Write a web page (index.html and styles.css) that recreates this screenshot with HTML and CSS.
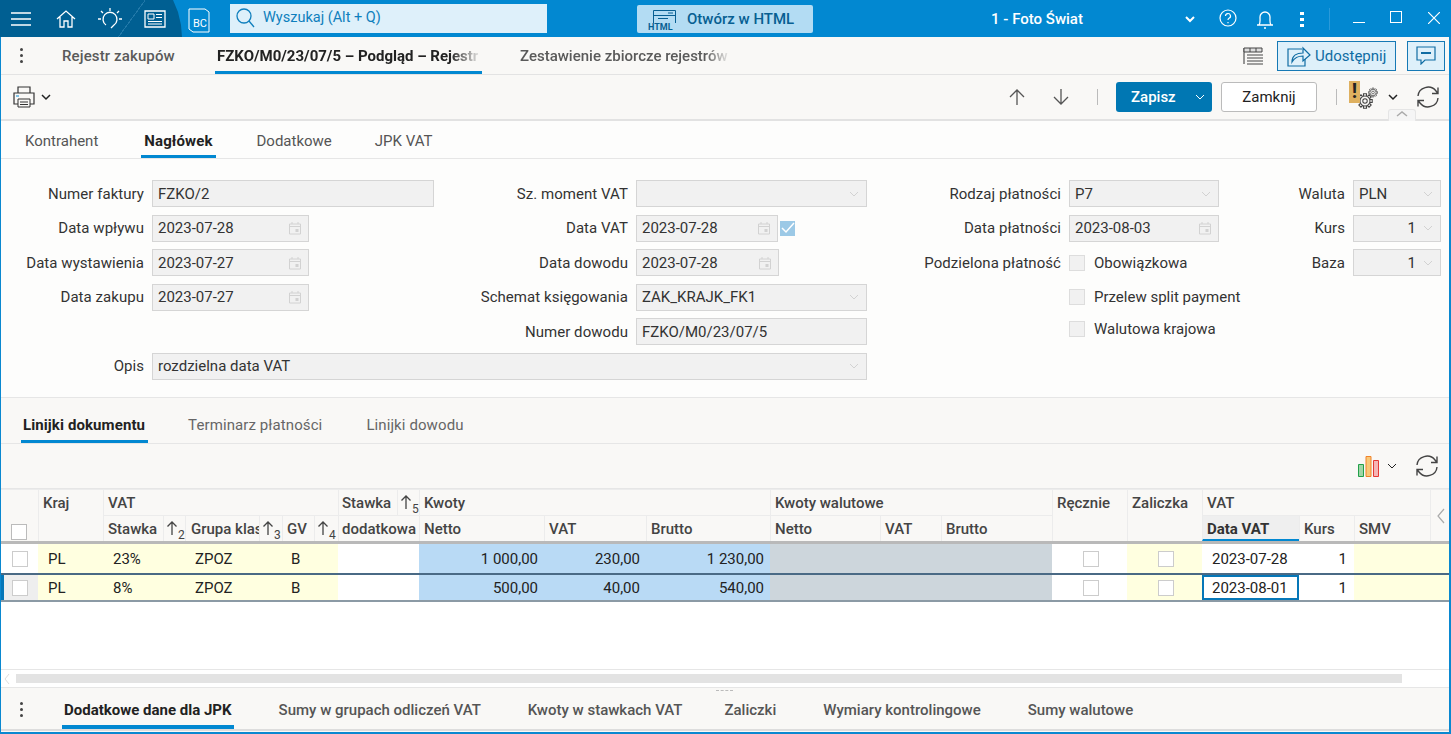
FILE: index.html
```html
<!DOCTYPE html>
<html lang="pl">
<head>
<meta charset="utf-8">
<title>FZKO/M0/23/07/5</title>
<link rel="stylesheet" href="styles.css">
</head>
<body>
<svg class="defs" width="0" height="0">
  <symbol id="cal" viewBox="0 0 14 14"><path d="M1.500 3h11v10h-11zM1.500 5.500h11M4 1v2M10 1v2" fill="none" stroke="currentColor"/><rect x="7.500" y="8" width="3" height="3" fill="currentColor"/></symbol>
  <symbol id="chev" viewBox="0 0 12 12"><path d="M2 4l4 4 4-4" fill="none" stroke="currentColor"/></symbol>
  <symbol id="refresh" viewBox="0 0 26 24"><path d="M3 11a10 9.500 0 0 1 18-5l2 2.500M23 2.500v6h-6M23 13a10 9.500 0 0 1-18 5l-2-2.500M3 21.500v-6h6" fill="none" stroke="currentColor" stroke-width="1.400"/></symbol>
  <symbol id="sort" viewBox="0 0 12 16"><path d="M6 15V2M1.500 6.500L6 2l4.500 4.500" fill="none" stroke="currentColor" stroke-width="1.300"/></symbol>
  <path id="tooth" d="M-1.500-5V-7.200H1.500V-5" fill="none" stroke="#444" stroke-width="1.100"/>
  <g id="gear">
    <circle r="5" fill="#f9f8f6" stroke="#444" stroke-width="1.100"/>
    <circle r="2.200" fill="none" stroke="#444" stroke-width="1.100"/>
    <use href="#tooth"/><use href="#tooth" transform="rotate(45)"/><use href="#tooth" transform="rotate(90)"/><use href="#tooth" transform="rotate(135)"/><use href="#tooth" transform="rotate(180)"/><use href="#tooth" transform="rotate(225)"/><use href="#tooth" transform="rotate(270)"/><use href="#tooth" transform="rotate(315)"/>
  </g>
</svg>
<div class="app">
  <header class="topbar">
    <div class="nav-dark">
      <svg class="ti" width="20" height="14" viewBox="0 0 20 14"><path d="M0 1h20M0 7h20M0 13h20" stroke="#fff" stroke-width="1.500"/></svg>
      <svg class="ti home" width="20" height="20" viewBox="0 0 20 20"><path d="M1 10L10 2l9 8M4 8v10h4v-6h4v6h4V8" fill="none" stroke="#fff" stroke-width="1.300"/></svg>
      <svg class="ti bulb" width="24" height="24" viewBox="0 0 24 24"><path d="M8 18a7 7 0 1 1 8 0l-3 3M12 1v3M3 4l2 2M21 4l-2 2M0 12h3M21 12h3" fill="none" stroke="#fff" stroke-width="1.300"/></svg>
      <svg class="ti news" width="22" height="18" viewBox="0 0 22 18"><path d="M1 1h20v16H1z" fill="none" stroke="#fff" stroke-width="1.300"/><path d="M4 4h6v5H4zM12 4.500h6M12 7.500h6M4 11.500h14M4 14h14" fill="none" stroke="#fff"/></svg>
    </div>
    <svg class="bc" width="22" height="25" viewBox="0 0 22 25"><path d="M1 1h16l4 3v20H5l-4-3z" fill="none" stroke="#fff"/><text x="5" y="19" class="bc-text">BC</text></svg>
    <div class="search">
      <svg width="19" height="20" viewBox="0 0 19 20"><circle cx="8" cy="8" r="7" fill="none" stroke="#0f7fbd" stroke-width="1.300"/><path d="M13 13l5 6" stroke="#0f7fbd" stroke-width="1.300"/></svg>
      <span>Wyszukaj (Alt + Q)</span>
    </div>
    <div class="html-btn">
      <svg width="28" height="22" viewBox="0 0 28 22"><path d="M5.500 14V1.500h22V14M5.500 6.500h22M10 9.500h10M20 4h5" fill="none" stroke="#075f92"/><text x="0" y="21" class="html-text">HTML</text></svg>
      <span>Otwórz w HTML</span>
    </div>
    <div class="company">1 - Foto Świat</div>
    <svg class="t-chev" width="12" height="12" viewBox="0 0 12 12"><path d="M2 4l4 4 4-4" fill="none" stroke="#fff" stroke-width="2"/></svg>
    <svg class="t-help" width="18" height="18" viewBox="0 0 18 18"><circle cx="9" cy="9" r="8" fill="none" stroke="#fff" stroke-width="1.200"/><path d="M6.500 7a2.500 2.500 0 1 1 3.500 2.300c-.7.400-1 .9-1 1.700M9 13v1.200" fill="none" stroke="#fff" stroke-width="1.200"/></svg>
    <svg class="t-bell" width="18" height="20" viewBox="0 0 18 20"><path d="M1 16h16M3 16c1.500-2 1-4 1-8a5 5 0 0 1 10 0c0 4-.5 6 1 8M8 19h2" fill="none" stroke="#fff" stroke-width="1.300"/></svg>
    <svg class="t-kebab" width="4" height="16" viewBox="0 0 4 16"><path d="M0 1h4v3H0zM0 7h4v3H0zM0 13h4v3H0z" fill="#fff"/></svg>
    <div class="t-sep"></div>
    <div class="t-min"></div>
    <div class="t-max"></div>
    <svg class="t-close" width="12" height="12" viewBox="0 0 12 12"><path d="M0 0l12 12M12 0L0 12" stroke="#fff" stroke-width="1.200"/></svg>
  </header>

  <div class="tabsbar">
    <div class="kebab"><i></i><i></i><i></i></div>
    <div class="ptab t1">Rejestr zakupów</div>
    <div class="ptab t2 on"><span class="fade">FZKO/M0/23/07/5 – Podgląd – Rejestr zakupów</span></div>
    <div class="ptab t3"><span class="fade">Zestawienie zbiorcze rejestrów VAT</span></div>
    <svg class="listicon" width="20" height="18" viewBox="0 0 20 18"><path d="M1 1v16" stroke="#333"/><path d="M1 1h18v4H1z" fill="#ddd" stroke="#444"/><path d="M7 1v4M13 1v4M4 8h16M4 11h16M4 14h16M4 17h16" stroke="#444"/></svg>
    <div class="share">
      <svg width="24" height="22" viewBox="0 0 24 22"><path d="M15 4H1v17h17v-7" fill="none" stroke="#0f6ca3" stroke-width="1.200"/><path d="M5 17c0-7 5-9 11-9V3l7 7-7 6v-5c-5 0-8 1-11 6z" fill="none" stroke="#0f6ca3" stroke-width="1.200"/></svg>
      <span>Udostępnij</span>
    </div>
    <div class="comment">
      <svg width="20" height="19" viewBox="0 0 20 19"><path d="M1 1h18v13H9l-4 4v-4H1z" fill="none" stroke="#0f6ca3" stroke-width="1.200"/><path d="M5 6h10v2H5z" fill="#0f6ca3"/></svg>
    </div>
  </div>

  <div class="toolbar">
    <svg class="print" width="22" height="22" viewBox="0 0 22 22"><path d="M5 7V1h12v6M5 18H1V7h20v11h-4" fill="none" stroke="#333" stroke-width="1.200"/><path d="M5 13h12v8H5zM7 16h8M7 18.500h8" fill="none" stroke="#333"/><path d="M3 10h3" stroke="#0a8ad0"/></svg>
    <svg class="ch" width="12" height="12" viewBox="0 0 12 12"><path d="M2 4l4 4 4-4" fill="none" stroke="#222" stroke-width="1.500"/></svg>
    <div class="grow"></div>
    <svg class="arrow" width="16" height="18" viewBox="0 0 16 18"><path d="M8 17V2M1 9l7-7 7 7" fill="none" stroke="#555" stroke-width="1.300"/></svg>
    <svg class="arrow a2" width="16" height="18" viewBox="0 0 16 18"><path d="M8 1v15M1 9l7 7 7-7" fill="none" stroke="#555" stroke-width="1.300"/></svg>
    <div class="vsep vs1"></div>
    <div class="save"><span>Zapisz</span><svg width="12" height="12"><use href="#chev"/></svg></div>
    <div class="close">Zamknij</div>
    <div class="vsep vs2"></div>
    <div class="gears">
      <svg width="21" height="22" viewBox="0 0 21 22"><g transform="translate(16 5.500) scale(.62)"><use href="#gear"/></g><g transform="translate(8 14)"><use href="#gear"/></g></svg>
      <b class="warn">!</b>
    </div>
    <svg class="ch c2" width="12" height="12" viewBox="0 0 12 12"><path d="M2 4l4 4 4-4" fill="none" stroke="#222" stroke-width="1.500"/></svg>
    <svg class="refresh" width="26" height="24"><use href="#refresh"/></svg>
    <div class="collapse"><svg width="14" height="8" viewBox="0 0 14 8"><path d="M2 6l5-4 5 4" fill="none" stroke="#aaa" stroke-width="1.500"/></svg></div>
  </div>

  <nav class="ftabs">
    <div class="ftab">Kontrahent</div>
    <div class="ftab on">Nagłówek</div>
    <div class="ftab">Dodatkowe</div>
    <div class="ftab">JPK VAT</div>
  </nav>

  <section class="form">
    <label>Numer faktury</label><div class="f"><span>FZKO/2</span></div>
    <label>Sz. moment VAT</label><div class="f"><span></span><svg class="fi" width="12" height="12"><use href="#chev"/></svg></div>
    <label>Rodzaj płatności</label><div class="f"><span>P7</span><svg class="fi" width="12" height="12"><use href="#chev"/></svg></div>
    <label>Waluta</label><div class="f"><span>PLN</span><svg class="fi" width="12" height="12"><use href="#chev"/></svg></div>

    <label>Data wpływu</label><div class="f d"><span>2023-07-28</span><svg class="fi" width="14" height="14"><use href="#cal"/></svg></div>
    <label>Data VAT</label><div class="wrap"><div class="f dv"><span>2023-07-28</span><svg class="fi" width="14" height="14"><use href="#cal"/></svg></div><div class="checked"><svg width="14" height="12" viewBox="0 0 14 12"><path d="M1 6l4 4 8-9" fill="none" stroke="#fff" stroke-width="1.500"/></svg></div></div>
    <label>Data płatności</label><div class="f"><span>2023-08-03</span><svg class="fi" width="14" height="14"><use href="#cal"/></svg></div>
    <label>Kurs</label><div class="f n"><span>1</span><svg class="fi" width="12" height="12"><use href="#chev"/></svg></div>

    <label>Data wystawienia</label><div class="f d"><span>2023-07-27</span><svg class="fi" width="14" height="14"><use href="#cal"/></svg></div>
    <label>Data dowodu</label><div class="f dd"><span>2023-07-28</span><svg class="fi" width="14" height="14"><use href="#cal"/></svg></div>
    <label>Podzielona płatność</label><div class="cb"><i></i><span>Obowiązkowa</span></div>
    <label>Baza</label><div class="f n"><span>1</span><svg class="fi" width="12" height="12"><use href="#chev"/></svg></div>

    <label>Data zakupu</label><div class="f d"><span>2023-07-27</span><svg class="fi" width="14" height="14"><use href="#cal"/></svg></div>
    <label>Schemat księgowania</label><div class="f"><span>ZAK_KRAJK_FK1</span><svg class="fi" width="12" height="12"><use href="#chev"/></svg></div>
    <label></label><div class="cb"><i></i><span>Przelew split payment</span></div>
    <label></label><div></div>

    <label></label><div></div>
    <label>Numer dowodu</label><div class="f"><span>FZKO/M0/23/07/5</span></div>
    <label></label><div class="cb up"><i></i><span>Walutowa krajowa</span></div>
    <label></label><div></div>

    <label>Opis</label><div class="f wide"><span>rozdzielna data VAT</span><svg class="fi" width="12" height="12"><use href="#chev"/></svg></div>
  </section>

  <nav class="dtabs">
    <div class="dtab on">Linijki dokumentu</div>
    <div class="dtab">Terminarz płatności</div>
    <div class="dtab">Linijki dowodu</div>
  </nav>

  <div class="charts">
    <svg width="24" height="23" viewBox="0 0 24 23"><path d="M1.500 9.500h5v12h-5z" fill="#9fd6a6" stroke="#22a04a"/><path d="M9 1.500h5v20H9z" fill="#f9c878" stroke="#f0822a"/><path d="M16.500 5.500h5v16h-5z" fill="#f5b5b5" stroke="#e53935"/></svg>
    <svg class="ch c3" width="12" height="12"><use href="#chev"/></svg>
    <svg class="refresh r2" width="26" height="24"><use href="#refresh"/></svg>
  </div>

  <section class="grid">
    <div class="head">
      <div class="h sel"><i></i></div>
      <div class="h kraj">Kraj</div>
      <div class="h g vat">VAT</div>
      <div class="h dod1">Stawka</div>
      <div class="h dods"><svg width="12" height="16"><use href="#sort"/></svg><sub>5</sub></div>
      <div class="h g kw">Kwoty</div>
      <div class="h g kwa">Kwoty walutowe</div>
      <div class="h tall rec">Ręcznie</div>
      <div class="h tall zal">Zaliczka</div>
      <div class="h g vat2">VAT</div>
      <div class="h tail"><svg width="10" height="18" viewBox="0 0 10 18"><path d="M8 2L2 9l6 7" fill="none" stroke="#aaa" stroke-width="1.200"/></svg></div>

      <div class="h">Stawka</div>
      <div class="h s"><svg width="12" height="16"><use href="#sort"/></svg><sub>2</sub></div>
      <div class="h clip">Grupa klasyfikacji</div>
      <div class="h s"><svg width="12" height="16"><use href="#sort"/></svg><sub>3</sub></div>
      <div class="h">GV</div>
      <div class="h s"><svg width="12" height="16"><use href="#sort"/></svg><sub>4</sub></div>
      <div class="h dod2">dodatkowa</div>
      <div class="h">Netto</div>
      <div class="h">VAT</div>
      <div class="h">Brutto</div>
      <div class="h">Netto</div>
      <div class="h">VAT</div>
      <div class="h">Brutto</div>
      <div class="h act">Data VAT</div>
      <div class="h">Kurs</div>
      <div class="h">SMV</div>
    </div>

    <div class="row">
      <div class="c sel"><i></i></div>
      <div class="c y pl">PL</div>
      <div class="c y rate">23%</div>
      <div class="c y gr">ZPOZ</div>
      <div class="c y gv">B</div>
      <div class="c sp2"></div>
      <div class="c bl">1 000,00</div>
      <div class="c bl">230,00</div>
      <div class="c bl">1 230,00</div>
      <div class="c gy sp3"></div>
      <div class="c box"><i></i></div>
      <div class="c box y"><i></i></div>
      <div class="c date">2023-07-28</div>
      <div class="c num">1</div>
      <div class="c y end"></div>
    </div>

    <div class="row cur">
      <div class="c sel"><i></i></div>
      <div class="c y pl">PL</div>
      <div class="c y rate">8%</div>
      <div class="c y gr">ZPOZ</div>
      <div class="c y gv">B</div>
      <div class="c sp2"></div>
      <div class="c bl">500,00</div>
      <div class="c bl">40,00</div>
      <div class="c bl">540,00</div>
      <div class="c gy sp3"></div>
      <div class="c box"><i></i></div>
      <div class="c box y"><i></i></div>
      <div class="c date focus">2023-08-01</div>
      <div class="c num">1</div>
      <div class="c y end"></div>
    </div>
    <div class="blank"></div>
    <div class="hscroll"><svg width="8" height="14" viewBox="0 0 8 14"><path d="M6 2L2 7l4 5" fill="none" stroke="#ddd"/></svg><div class="thumb"></div></div>
  </section>

  <footer class="btabs">
    <div class="grip"></div>
    <div class="kebab"><i></i><i></i><i></i></div>
    <div class="btab on">Dodatkowe dane dla JPK</div>
    <div class="btab">Sumy w grupach odliczeń VAT</div>
    <div class="btab kw3">Kwoty w stawkach VAT</div>
    <div class="btab">Zaliczki</div>
    <div class="btab">Wymiary kontrolingowe</div>
    <div class="btab">Sumy walutowe</div>
  </footer>
</div>
</body>
</html>
```

FILE: styles.css
```css
* { box-sizing: border-box; }
html, body { margin: 0; height: 100%; overflow: hidden; }
body { font: 15px/1.2 Roboto, "Liberation Sans", sans-serif; color: #222; background: #fff; }
.defs { position: absolute; }
svg { display: block; flex: none; }
.app { width: 1451px; height: 734px; display: flex; flex-direction: column; border: solid #0a88d0; border-width: 0 2px 2px 1px; background: #f9f8f6; }

.topbar { margin: 0 -2px 0 -1px; height: 37px; flex: none; background: #0288d1; display: flex; align-items: center; color: #fff; }
.topbar > * { flex: none; }
.nav-dark { width: 182px; height: 37px; background: linear-gradient(126deg, #005f92 117px, #2178a8 117px, #2178a8 118px, #005f92 118px); clip-path: polygon(0 0, 173px 0, 178px 12px, 181px 25px, 182px 37px, 0 37px); display: flex; align-items: center; padding-left: 11px; }
.home { margin-left: 25px; }
.bulb { margin-left: 22px; }
.news { margin-left: 22px; }
.bc { margin-left: 6px; margin-top: 3px; }
.bc-text { font: 11px Roboto, sans-serif; fill: #fff; }
.search { width: 317px; height: 29px; margin-left: 20px; background: #def0fa; display: flex; align-items: center; gap: 8px; padding-left: 6px; color: #0f7fbd; margin-top: -1px; font-size: 14.500px; }
.html-btn { width: 176px; height: 28px; margin-left: 90px; background: #b3dcf3; border-radius: 2px; display: flex; align-items: center; gap: 11px; padding-left: 11px; color: #075f92; font-weight: 500; }
.html-btn svg { margin-top: 3px; }
.html-text { font: 700 9px Roboto, sans-serif; fill: #075f92; }
.company { width: 290px; text-align: center; margin-left: 79px; font-weight: 500; }
.t-chev { margin-left: 2px; }
.t-help { margin-left: 23px; margin-top: -1px; }
.t-bell { margin-left: 19px; }
.t-kebab { margin-left: 26px; }
.t-sep { width: 1px; height: 22px; background: #2a9ada; margin-left: 25px; }
.t-min { width: 12px; height: 1px; background: #fff; margin: 8px 0 0 23px; }
.t-max { width: 12px; height: 12px; border: 1px solid #fff; margin: -3px 0 0 25px; }
.t-close { margin: -2px 0 0 26px; }

.tabsbar { height: 38px; flex: none; display: flex; align-items: center; border-bottom: 1px solid #e3e3e3; position: relative; }
.tabsbar > * { flex: none; }
.kebab { width: 4px; margin-left: 19px; display: flex; flex-direction: column; gap: 3px; }
.kebab i { width: 3px; height: 3px; background: #444; border-radius: 50%; }
.ptab { font-weight: 500; color: #5a5a5a; height: 37px; padding-top: 10px; overflow: hidden; white-space: nowrap; }
.t1 { margin-left: 38px; width: 153px; letter-spacing: .13px; }
.t2 { width: 267px; color: #222; font-weight: 700; padding-left: 2px; border-bottom: 3px solid #0288d1; }
.t3 { width: 211px; margin-left: 38px; }
.fade { display: block; -webkit-mask-image: linear-gradient(90deg, #000 88%, transparent 100%); mask-image: linear-gradient(90deg, #000 88%, transparent 100%); }
.listicon { margin-left: 512px; }
.share { width: 119px; height: 30px; margin-left: 14px; background: #def0fa; border: 1px solid #1679b5; display: flex; align-items: center; gap: 4px; padding-left: 9px; color: #0f6ca3; }
.comment { width: 38px; height: 30px; margin-left: 11px; background: #def0fa; border: 1px solid #1679b5; display: flex; align-items: center; justify-content: center; }

.toolbar { height: 46px; flex: none; display: flex; align-items: center; border-bottom: 2px solid #e2e2e2; position: relative; }
.toolbar > svg, .toolbar > div { flex: none; }
.toolbar > .grow { flex: 1; }
.print { margin-left: 12px; }
.ch { margin-left: 5px; color: #222; }
.a2 { margin-left: 28px; }
.vsep { width: 1px; height: 16px; background: #bbb; }
.vs1 { margin-left: 28px; }
.save { width: 96px; height: 30px; margin-left: 18px; background: #0077b3; color: #fff; border-radius: 3px; font-weight: 500; display: flex; align-items: center; padding-left: 15px; }
.save span { flex: 1; }
.save svg { margin-right: 6px; }
.close { width: 96px; height: 30px; margin-left: 9px; background: #fff; border: 1px solid #bbb; border-radius: 3px; display: flex; align-items: center; justify-content: center; }
.vs2 { margin-left: 19px; }
.gears { width: 28px; height: 28px; margin-left: 12px; position: relative; padding: 4px 0 0 8px; }
.warn { position: absolute; left: 0; top: -2px; width: 11px; height: 22px; background: #deb05f; color: #222; font: 700 20px/21px Roboto, sans-serif; text-align: center; }
.c2 { margin-left: 10px; }
.refresh { margin-left: 16px; margin-right: 8px; color: #444; }
.collapse { position: absolute; right: 33px; bottom: -2px; width: 28px; height: 12px; background: #f5f5f5; border: 1px solid #e5e5e5; border-bottom: 0; display: flex; justify-content: center; border-radius: 3px 3px 0 0; }

.ftabs { height: 38px; flex: none; display: flex; border-bottom: 1px solid #e6e6e6; padding-left: 24px; background: #fdfdfc; }
.ftab { padding: 11px 0 0; color: #555; margin-right: 43px; }
.ftab.on { color: #222; font-weight: 700; letter-spacing: .1px; border-bottom: 3px solid #0288d1; padding: 11px 3px 0; margin: 0 41px 0 0; height: 37px; }

.form { height: 239px; flex: none; display: grid; grid-template-columns: 151px 282px 202px 231px 202px 150px 134px 88px; grid-auto-rows: 34.500px; padding-top: 17.600px; align-items: center; border-bottom: 1px solid #e6e6e6; background: #fdfdfc; }
.form label { text-align: right; padding-right: 8px; color: #333; white-space: nowrap; letter-spacing: .05px; }
.f { height: 27px; background: #f1f1f1; border: 1px solid #d5d5d5; display: flex; align-items: center; justify-content: space-between; padding: 0 5px; color: #333; }
.f.d { width: 157px; }
.f.dv { width: 142px; }
.f.dd { width: 143px; }
.f.n { justify-content: flex-end; gap: 6px; }
.f.wide { grid-column: span 3; }
.fi { color: #d2d2d2; margin-right: 1px; }
.wrap { display: flex; align-items: center; gap: 2px; }
.checked { width: 15px; height: 15px; background: #9cc9e6; display: flex; align-items: center; justify-content: center; flex: none; }
.cb { display: flex; align-items: center; gap: 9px; white-space: nowrap; color: #333; }
.cb i { width: 16px; height: 16px; background: #f1f1f1; border: 1px solid #ddd; flex: none; }
.cb.up { margin-top: -6px; }

.dtabs { height: 46px; flex: none; display: flex; padding-left: 20px; border-bottom: 1px solid #e6e6e6; letter-spacing: .1px; }
.dtab { padding: 18px 0 0; color: #666; margin-right: 44px; }
.dtab.on { color: #222; font-weight: 700; border-bottom: 3px solid #0288d1; padding: 18px 3px 0 2px; margin-right: 40px; }

.charts { height: 45px; flex: none; display: flex; align-items: center; justify-content: flex-end; border-bottom: 1px solid #e6e6e6; padding-right: 9px; }
.c3 { margin-left: 5px; }
.r2 { margin-left: 16px; margin-right: 0; }

.grid { --cols: 37px 65px 60px 22px 74px 23px 32px 24px 59px 22px 125px 102px 124px 110px 61px 111px 75px 75px 97px 55px 76px 19px; flex: 1; display: flex; flex-direction: column; background: #fff; min-height: 0; }
.head { display: grid; grid-template-columns: var(--cols); grid-template-rows: 26px 26px; background: #f9f8f6; border-bottom: 3px solid #b9b9b9; flex: none; }
.h { padding: 4px 4px 0; font-weight: 500; color: #444; border-left: 1px solid #ececec; border-top: 1px solid #ececec; white-space: nowrap; overflow: hidden; }
.h.sel { grid-row: span 2; border-left: 0; display: flex; align-items: flex-end; padding: 0 0 1px 10px; }
.h.sel i { width: 16px; height: 16px; background: #fff; border: 1px solid #bbb; }
.kraj { grid-row: span 2; }
.vat { grid-column: span 6; }
.kw { grid-column: span 3; }
.kwa { grid-column: span 3; }
.rec, .zal { grid-row: span 2; }
.vat2 { grid-column: span 3; }
.tail { grid-row: span 2; display: flex; align-items: center; padding: 0 0 0 5px; }
.dod1 { padding-left: 3px; }
.dods, .s { padding: 4px 0 0 2px; display: flex; }
.h sub { font: 12px/12px Roboto, sans-serif; margin: 9px 0 0 0; }
.clip { padding-left: 5px; }
.dod2 { grid-column: span 2; padding-left: 3px; }
.act { background: #efefef; color: #333; font-weight: 700; border-bottom: 2px solid #0288d1; }

.row { display: grid; grid-template-columns: var(--cols); height: 29px; flex: none; }
.cur { border-top: 2px solid #4a6a85; border-bottom: 2px solid #8b9aa5; }
.row .c { display: flex; align-items: center; white-space: nowrap; overflow: hidden; color: #222; }
.c.sel { padding-left: 11px; background: #fff; }
.c.sel i, .box i { width: 16px; height: 16px; background: #fff; border: 1px solid #ccc; flex: none; }
.cur .c.sel { background: #eee; border-left: 3px solid #0677b8; padding-left: 8px; }
.y { background: #ffffe0; }
.pl { padding-left: 10px; }
.rate { padding-left: 10px; grid-column: span 2; }
.gr { padding-left: 10px; grid-column: span 2; }
.gv { padding-left: 9px; grid-column: span 2; }
.sp2 { grid-column: span 2; background: #fff; }
.bl { background: #b9daf5; justify-content: flex-end; padding-right: 6px; }
.gy { background: #cdd6dc; }
.sp3 { grid-column: span 3; }
.box { justify-content: center; padding-left: 2px; }
.date { padding-left: 10px; background: #fff; }
.focus { border: 2px solid #0677b8; padding-left: 8px; }
.num { justify-content: flex-end; padding-right: 7px; background: #fff; }
.end { grid-column: span 2; }
.blank { flex: 1; background: #fff; border-bottom: 1px solid #e6e6e6; }
.hscroll { height: 18px; flex: none; background: #fff; display: flex; align-items: center; padding-left: 2px; gap: 5px; border-bottom: 1px solid #e6e6e6; }
.thumb { width: 1386px; height: 9px; background: #e3e3e3; }

.btabs { height: 43px; flex: none; display: flex; align-items: flex-start; position: relative; border-bottom: 2px solid #ddd; margin-bottom: 1px; }
.btabs > * { flex: none; }
.btabs .kebab { margin: 14px 0 0 19px; }
.grip { position: absolute; left: 715px; top: 2px; width: 17px; border-top: 1px dashed #bbb; }
.btab { color: #555; font-weight: 500; padding: 13px 2px 0; height: 41px; margin-right: 43px; white-space: nowrap; }
.btab.on { color: #222; font-weight: 700; border-bottom: 4px solid #0288d1; margin-left: 38px; }
.btab.kw3 { margin-right: 38px; }
```
